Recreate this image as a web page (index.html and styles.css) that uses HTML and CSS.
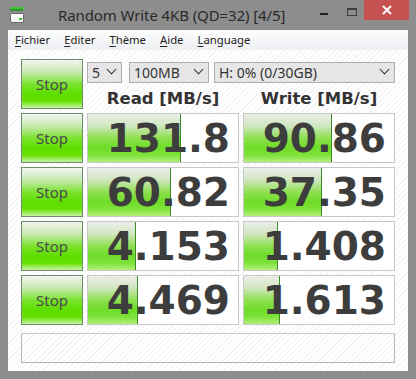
FILE: index.html
```html
<!DOCTYPE html>
<html lang="fr">
<head>
    <meta charset="UTF-8">
    <title>Random Write 4KB (QD=32) [4/5]</title>
    <link rel="stylesheet" href="styles.css">
</head>
<body>

<div class="window">
    <div class="titlebar">
        <svg class="app-icon" width="16" height="16" viewBox="0 0 16 16">
            <rect x="0" y="0" width="15" height="2" fill="#3fc23a"/>
            <rect x="0" y="2" width="13" height="2" fill="#2f9a2c"/>
            <rect x="0.5" y="6.5" width="13" height="9" rx="1.5" fill="#f4f4f4" stroke="#6a6a6a"/>
            <rect x="1" y="7" width="12" height="3" fill="#ffffff"/>
            <rect x="9" y="11" width="3" height="2" fill="#3fc23a"/>
        </svg>
        <div class="title">Random Write 4KB (QD=32) [4/5]</div>
        <div class="controls">
            <span class="minimize"></span>
            <span class="maximize"></span>
            <span class="close">
                <svg width="10" height="10" viewBox="0 0 10 10"><path d="M1 1 L9 9 M9 1 L1 9" stroke="#fff" stroke-width="2"/></svg>
            </span>
        </div>
    </div>

    <div class="client">
        <div class="menubar">
            <span class="menu-item"><u>F</u>ichier</span>
            <span class="menu-item"><u>E</u>diter</span>
            <span class="menu-item"><u>T</u>hème</span>
            <span class="menu-item"><u>A</u>ide</span>
            <span class="menu-item"><u>L</u>anguage</span>
        </div>

        <div class="content">
            <div class="grid">
                <button class="stop">Stop</button>
                <div class="top">
                    <div class="selects">
                        <div class="select sel-count">5<span class="chev"></span></div>
                        <div class="select sel-size">100MB<span class="chev"></span></div>
                        <div class="select sel-drive">H: 0% (0/30GB)<span class="chev"></span></div>
                    </div>
                    <div class="headers">
                        <div class="head">Read [MB/s]</div>
                        <div class="head">Write [MB/s]</div>
                    </div>
                </div>

                <button class="stop">Stop</button>
                <div class="value"><div class="fill" style="width:92px"></div><span>131.8</span></div>
                <div class="value"><div class="fill" style="width:87px"></div><span>90.86</span></div>

                <button class="stop">Stop</button>
                <div class="value"><div class="fill" style="width:82px"></div><span>60.82</span></div>
                <div class="value"><div class="fill" style="width:77px"></div><span>37.35</span></div>

                <button class="stop">Stop</button>
                <div class="value"><div class="fill" style="width:47px"></div><span>4.153</span></div>
                <div class="value"><div class="fill" style="width:33px"></div><span>1.408</span></div>

                <button class="stop">Stop</button>
                <div class="value"><div class="fill" style="width:49px"></div><span>4.469</span></div>
                <div class="value"><div class="fill" style="width:35px"></div><span>1.613</span></div>
            </div>
            <div class="comment"></div>
        </div>
    </div>
</div>

</body>
</html>
```

FILE: styles.css
```css
body { margin: 0; padding: 0; background: #8d8d8d; font-family: "Noto Sans", sans-serif; }
.window { width: 416px; height: 379px; background: #8d8d8d; overflow: hidden; }

.titlebar { height: 30px; display: flex; align-items: flex-start; position: relative; }
.app-icon { margin: 7px 0 0 10px; }
.title { margin: 5px 0 0 32px; font-size: 15px; color: #2a2a2a; letter-spacing: -0.1px; }
.controls { margin-left: auto; margin-right: 7px; display: flex; align-items: flex-start; }
.minimize { width: 8px; height: 2px; background: #222; margin: 13px 19px 0 0; }
.maximize { width: 8px; height: 5px; border: 1px solid #3a3a3a; border-top-width: 2px; margin: 8px 7px 0 0; }
.close { width: 45px; height: 20px; background: #c75050; display: flex; align-items: center; justify-content: center; }

.client { margin: 0 8px; height: 341px; background: #fff; }
.menubar { height: 20px; display: flex; align-items: center; padding-left: 7px; gap: 14px; font-size: 11.3px; color: #222;
    background: linear-gradient(#fdfdfd, #eef0f3); border-bottom: 1px solid #f0f0f0; box-sizing: border-box; }
.menu-item u { text-decoration-thickness: 1px; text-underline-offset: 2px; }

.content { height: 321px; box-sizing: border-box; padding: 9px 0 0 13px;
    background: repeating-linear-gradient(135deg, #ffffff 0, #ffffff 3px, #f3f3f3 3px, #f3f3f3 4px); }

.grid { display: grid; grid-template-columns: 62px 152px 152px; grid-auto-rows: 50px; column-gap: 4px; row-gap: 4px; }

.stop { box-sizing: border-box; margin: 0; padding: 0; border: 1px solid #6f8a6c; font-family: "Noto Sans", sans-serif; font-size: 15px; color: #4a4a4a;
    background: linear-gradient(#f2f4f0 0%, #c8eab0 25%, #7ce330 50%, #5fde00 70%, #66e000 85%, #c6f4a0 100%); }

.top { grid-column: 2 / 4; display: flex; flex-direction: column; }
.selects { display: flex; margin-top: 3px; }
.select { box-sizing: border-box; height: 21px; background: #e6e6e6; border: 1px solid #adadad; font-size: 14px; color: #333;
    display: flex; align-items: center; padding-left: 4px; line-height: 1; }
.sel-count { width: 35px; margin-right: 7px; }
.sel-size { width: 80px; margin-right: 5px; }
.sel-drive { width: 181px; }
.chev { margin-left: auto; margin-right: 6px; width: 6px; height: 6px; border-right: 1.5px solid #333; border-bottom: 1.5px solid #333; transform: translateY(-3px) rotate(45deg); }

.headers { display: grid; grid-template-columns: 152px 152px; column-gap: 4px; }
.head { text-align: center; font-family: "DejaVu Sans", sans-serif; font-weight: bold; font-size: 16.5px; color: #333; margin-top: 6px; }

.value { position: relative; box-sizing: border-box; border: 1px solid #c8c8c8; background: #fff;
    display: flex; align-items: center; justify-content: flex-end; padding-right: 8px; }
.value span { position: relative; font-family: "DejaVu Sans", sans-serif; font-weight: bold; font-size: 39px; color: #3d3d3d; }
.fill { position: absolute; left: 0; top: 0; bottom: 0; border-right: 1px solid #3a8a2a;
    background: linear-gradient(#eceee9 0%, #d0e6c0 25%, #8fe050 50%, #6fdc28 70%, #7de238 85%, #b2f078 100%); }

.comment { box-sizing: border-box; width: 374px; height: 30px; margin-top: 8px; border: 1px solid #b4b4b4; border-top-color: #c8c8c8; background: transparent; }
```
